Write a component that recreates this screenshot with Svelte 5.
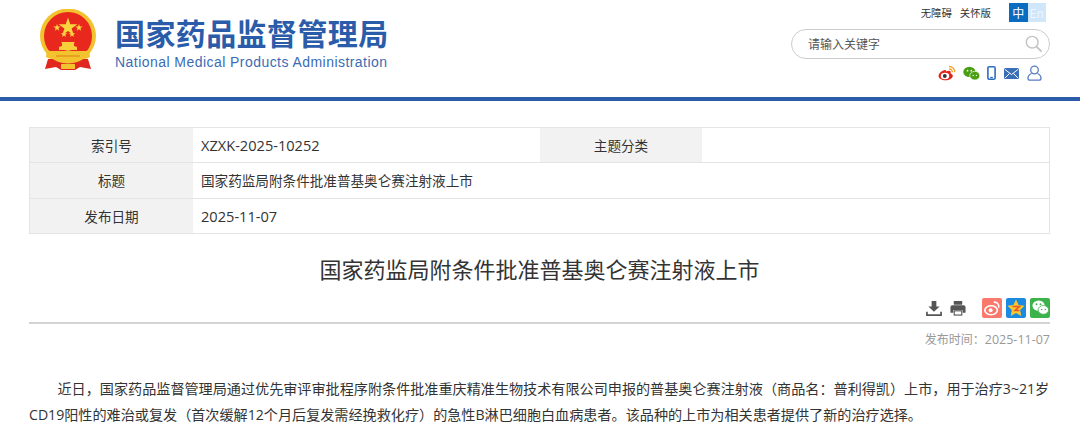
<script>
	const rows = [
		[
			{ label: '索引号', value: 'XZXK-2025-10252', latin: true },
			{ label: '主题分类', value: '' }
		],
		[{ label: '标题', value: '国家药监局附条件批准普基奥仑赛注射液上市', wide: true }],
		[{ label: '发布日期', value: '2025-11-07', wide: true, latin: true }]
	];
</script>

<header class="header">
	<div class="brand">
		<svg class="emblem" viewBox="0 0 56 61" width="56" height="61">
			<path d="M8 50 L5 60 L16 58 L21 61 L35 61 L40 58 L51 60 L48 50 Z" fill="#e0281e" />
			<ellipse cx="28" cy="27" rx="28" ry="27.500" fill="#f2c22f" />
			<path d="M28 3a24 24 0 0 1 24 24c0 6-2 11-5 15H9c-3-4-5-9-5-15A24 24 0 0 1 28 3z" fill="#e8281c" />
			<path d="M28 8.500l2.300 6.800h7.100l-5.800 4.200 2.200 6.800-5.800-4.200-5.800 4.200 2.200-6.800-5.800-4.200h7.100z" fill="#f9d53e" />
			<path d="M17 15l.9 2.600h2.700l-2.200 1.600.8 2.600-2.200-1.600-2.200 1.600.8-2.600-2.200-1.600h2.700z" fill="#f9d53e" />
			<path d="M39 15l.9 2.600h2.700l-2.200 1.600.8 2.600-2.200-1.600-2.200 1.600.8-2.600-2.200-1.600h2.700z" fill="#f9d53e" />
			<path d="M24 22l.8 2.300h2.400l-1.900 1.400.7 2.300-2-1.400-2 1.400.7-2.300-1.900-1.400h2.400z" fill="#f9d53e" />
			<path d="M32 22l.8 2.300h2.400l-1.900 1.400.7 2.300-2-1.400-2 1.400.7-2.300-1.900-1.400h2.400z" fill="#f9d53e" />
			<path d="M19 41v-3l3-1v-3l-1-1h14l-1 1v3l3 1v3z" fill="#f6cf3a" />
			<path d="M7 41 Q16 45 28 41 Q40 45 49 41 L50 48 Q44 52 38 48 L36 53 L20 53 L18 48 Q12 52 6 48 Z" fill="#f2c22f" />
			<path d="M16 46h24v2H16z" fill="#e8a020" />
			<path d="M21 55h14v5H21z" fill="#f2c22f" />
		</svg>
		<div class="brand-text">
			<div class="brand-cn">国家药品监督管理局</div>
			<div class="brand-en">National Medical Products Administration</div>
		</div>
	</div>

	<div class="tools">
		<div class="top-links">
			<span>无障碍</span>
			<span>关怀版</span>
			<div class="lang">
				<span class="zh">中</span>
				<span class="en">En</span>
			</div>
		</div>
		<div class="search">
			<span>请输入关键字</span>
			<svg viewBox="0 0 20 20" width="18" height="18" fill="none" stroke="#c4c4c4" stroke-width="1.600">
				<circle cx="8" cy="8" r="6.500" />
				<path d="M12.800 12.800l5.600 5.600" stroke-width="2" />
			</svg>
		</div>
		<div class="socials">
			<svg viewBox="0 0 18 16" width="18" height="16">
				<path d="M7.500 5C3.500 5.500.6 8.500.6 11c0 2.600 3.200 4.300 6.800 4.300 4 0 7.400-2 7.400-4.500 0-1.600-1.500-2-2.300-2.300.6-1.500.2-2.700-1.500-2.700-1 0-2 .4-2.600.7-.2-.6-.4-1.500-.9-1.500z" fill="#e2231a" />
				<ellipse cx="7" cy="11" rx="4.200" ry="3.200" fill="#fff" />
				<circle cx="6.800" cy="11" r="1.900" fill="#333" />
				<path d="M11 1.500a5.500 5.500 0 0 1 5.800 5.800M11.200 4a3 3 0 0 1 3.100 3.200" fill="none" stroke="#f0a020" stroke-width="1.300" />
			</svg>
			<svg viewBox="0 0 18 15" width="17" height="15">
				<ellipse cx="6.800" cy="5.800" rx="6.500" ry="5.500" fill="#4a9e12" />
				<ellipse cx="12.500" cy="9.800" rx="5.300" ry="4.600" fill="#4a9e12" stroke="#fff" stroke-width=".7" />
				<circle cx="4.800" cy="4.500" r=".9" fill="#fff" />
				<circle cx="8.800" cy="4.500" r=".9" fill="#fff" />
				<circle cx="10.800" cy="9.500" r=".7" fill="#fff" />
				<circle cx="14.200" cy="9.500" r=".7" fill="#fff" />
			</svg>
			<svg class="phone" viewBox="0 0 10 16" width="9" height="16">
				<rect x="1" y="1" width="8" height="14" rx="1.500" fill="none" stroke="#2f6fc0" stroke-width="1.800" />
				<path d="M3.500 13h3" stroke="#2f6fc0" stroke-width="1.400" />
			</svg>
			<svg viewBox="0 0 15 11" width="15" height="11">
				<rect width="15" height="11" rx="1.500" fill="#3a6fb8" />
				<path d="M1 1.500l6.500 5 6.500-5M1 10l4.500-4.500M14 10L9.500 5.500" fill="none" stroke="#fff" stroke-width="1" />
			</svg>
			<svg class="user" viewBox="0 0 15 16" width="15" height="16" fill="none" stroke="#5a7cc0" stroke-width="1.300">
				<circle cx="7.500" cy="5" r="3.800" />
				<path d="M4.500 8.500C2.200 9.500 1 11 1 13.200c0 1.200.8 2 2 2h9c1.200 0 2-.8 2-2 0-2.200-1.200-3.700-3.500-4.700" />
			</svg>
		</div>
	</div>
</header>

<main class="page">
	<div class="meta">
		{#each rows as row}
			<div class="meta-row">
				{#each row as cell}
					<div class="meta-label">{cell.label}</div>
					<div class="meta-value" class:wide={cell.wide} class:latin={cell.latin}>{cell.value}</div>
				{/each}
			</div>
		{/each}
	</div>

	<h1 class="title">国家药监局附条件批准普基奥仑赛注射液上市</h1>

	<div class="actions">
		<svg viewBox="0 0 17 17" width="16" height="16" fill="#555">
			<path d="M6 1h5v6h3.500l-6 5.500-6-5.500H6z" />
			<path d="M1 12.500v3.500h15v-3.500" fill="none" stroke="#555" stroke-width="1.800" />
		</svg>
		<svg class="printer" viewBox="0 0 17 17" width="16" height="16" fill="#555">
			<rect x="4" y="1" width="9" height="4" rx=".5" />
			<path d="M2.500 5.500h12a2 2 0 0 1 2 2v6h-3v-3h-10v3H.5v-6a2 2 0 0 1 2-2z" />
			<rect x="4.500" y="11.500" width="8" height="4.500" fill="none" stroke="#555" stroke-width="1.200" />
		</svg>
		<div class="share weibo">
			<svg viewBox="0 0 20 20" width="18" height="18">
				<ellipse cx="9" cy="12.500" rx="7" ry="5" fill="none" stroke="#fff" stroke-width="1.800" />
				<circle cx="8.500" cy="12.500" r="2.200" fill="#fff" />
				<path d="M12 3.500a5 5 0 0 1 5.500 6" fill="none" stroke="#fff" stroke-width="1.800" />
			</svg>
		</div>
		<div class="share qzone">
			<svg viewBox="0 0 20 20" width="20" height="20">
				<path d="M10 1.500l2.600 5.600 6 .7-4.500 4.100 1.200 6L10 15l-5.300 2.900 1.200-6L1.400 7.800l6-.7z" fill="#fbc72e" />
				<path d="M6.500 8.500h7l-4.500 4h4.500" fill="none" stroke="#e8592a" stroke-width="1.500" />
			</svg>
		</div>
		<div class="share wechat">
			<svg viewBox="0 0 20 20" width="19" height="19">
				<ellipse cx="8" cy="8" rx="6.500" ry="5.500" fill="#fff" />
				<ellipse cx="13" cy="12.500" rx="5.500" ry="4.600" fill="#fff" stroke="#3cb34a" stroke-width=".8" />
				<circle cx="5.800" cy="6.500" r="1" fill="#3cb34a" />
				<circle cx="10" cy="6.500" r="1" fill="#3cb34a" />
				<circle cx="11.200" cy="12" r=".8" fill="#3cb34a" />
				<circle cx="15" cy="12" r=".8" fill="#3cb34a" />
			</svg>
		</div>
	</div>

	<div class="publish">发布时间：<span class="publish-date">2025-11-07</span></div>

	<article class="body">
		<p>近日，国家药品监督管理局通过优先审评审批程序附条件批准重庆精准生物技术有限公司申报的普基奥仑赛注射液（商品名：普利得凯）上市，用于治疗3~21岁CD19阳性的难治或复发（首次缓解12个月后复发需经挽救化疗）的急性B淋巴细胞白血病患者。该品种的上市为相关患者提供了新的治疗选择。</p>
	</article>
</main>

<style>
	:global(body) {
		font-family: "Open Sans", "Noto Sans CJK SC", sans-serif;
		background: #fff;
		color: #333;
		overflow: hidden;
	}

	.header {
		height: 97px;
		border-bottom: 4px solid #2a5caa;
		display: flex;
		justify-content: space-between;
		padding: 0 30px 0 40px;
	}

	.brand {
		display: flex;
		gap: 19px;
		padding-top: 9px;
	}

	.emblem {
		flex-shrink: 0;
	}

	.brand-text {
		padding-top: 5px;
	}

	.brand-cn {
		font-family: "Noto Sans CJK SC", sans-serif;
		font-size: 30px;
		font-weight: 700;
		line-height: 36px;
		letter-spacing: .4px;
		color: #2a5caa;
		white-space: nowrap;
	}

	.brand-en {
		font-family: "Liberation Sans", sans-serif;
		font-size: 14px;
		line-height: 18px;
		margin-top: 3px;
		letter-spacing: .45px;
		color: #3b6cb3;
		white-space: nowrap;
	}

	.tools {
		width: 260px;
		display: flex;
		flex-direction: column;
		align-items: flex-end;
	}

	.top-links {
		display: flex;
		align-items: center;
		height: 19px;
		margin-top: 3px;
		margin-right: 4px;
		font-size: 10.4px;
		color: #333;
		gap: 8px;
		font-family: "Noto Sans CJK SC", sans-serif;
	}

	.lang {
		display: flex;
		margin-left: 10px;
	}

	.lang span {
		width: 18.500px;
		height: 19px;
		line-height: 19px;
		text-align: center;
		font-size: 12px;
	}

	.zh {
		background: #0a6cc0;
		color: #fff;
	}

	.en {
		background: #cfe6fb;
		color: #eef6fd;
	}

	.search {
		width: 259px;
		height: 30px;
		margin-top: 7px;
		box-sizing: border-box;
		border: 1px solid #ccc;
		border-radius: 15px;
		display: flex;
		align-items: center;
		justify-content: space-between;
		padding: 0 6px 0 16px;
		font-size: 12px;
		color: #555;
	}

	.socials {
		display: flex;
		align-items: center;
		gap: 7px;
		margin-top: 5px;
		margin-right: 8px;
		height: 18px;
	}

	.phone {
		margin-right: 1px;
	}

	.user {
		margin-left: 1px;
	}

	.page {
		padding: 26px 30px 0 29px;
	}

	.meta {
		border: 1px solid #e4e4e4;
		border-bottom: 0;
	}

	.meta-row {
		display: flex;
		height: 34.330px;
		border-bottom: 1px solid #e4e4e4;
		font-size: 13.6px;
		line-height: 35px;
	}

	.meta-label {
		width: 163px;
		background: #f2f2f2;
		text-align: center;
		flex-shrink: 0;
	}

	.meta-value {
		width: 347px;
		box-sizing: border-box;
		padding-left: 8px;
	}

	.latin {
		font-size: 14.600px;
	}

	.meta-row > :nth-child(3) {
		width: 162px;
	}

	.meta-value.wide {
		flex: 1;
	}

	.title {
		margin: 19px 0 0;
		font-size: 22px;
		font-weight: 400;
		line-height: 32px;
		text-align: center;
		color: #333;
	}

	.actions {
		display: flex;
		justify-content: flex-end;
		align-items: center;
		height: 20px;
		margin-top: 13px;
		padding-bottom: 4px;
		border-bottom: 2px solid #d4d4d4;
		gap: 4px;
	}

	.printer {
		margin: 0 12px 0 4px;
	}

	.share {
		width: 20px;
		height: 20px;
		border-radius: 2px;
		display: flex;
		align-items: center;
		justify-content: center;
	}

	.weibo {
		background: #f97a6c;
	}

	.qzone {
		background: #1a8be0;
	}

	.wechat {
		background: #3cb34a;
	}

	.publish {
		margin-top: 7px;
		text-align: right;
		font-size: 12px;
		line-height: 18px;
		color: #999;
	}

	.publish-date {
		font-size: 12.500px;
	}

	.body {
		margin-top: 27px;
		font-size: 14.12px;
		line-height: 26px;
		color: #333;
	}

	.body p {
		margin: 0;
		text-indent: 28.500px;
	}
</style>
